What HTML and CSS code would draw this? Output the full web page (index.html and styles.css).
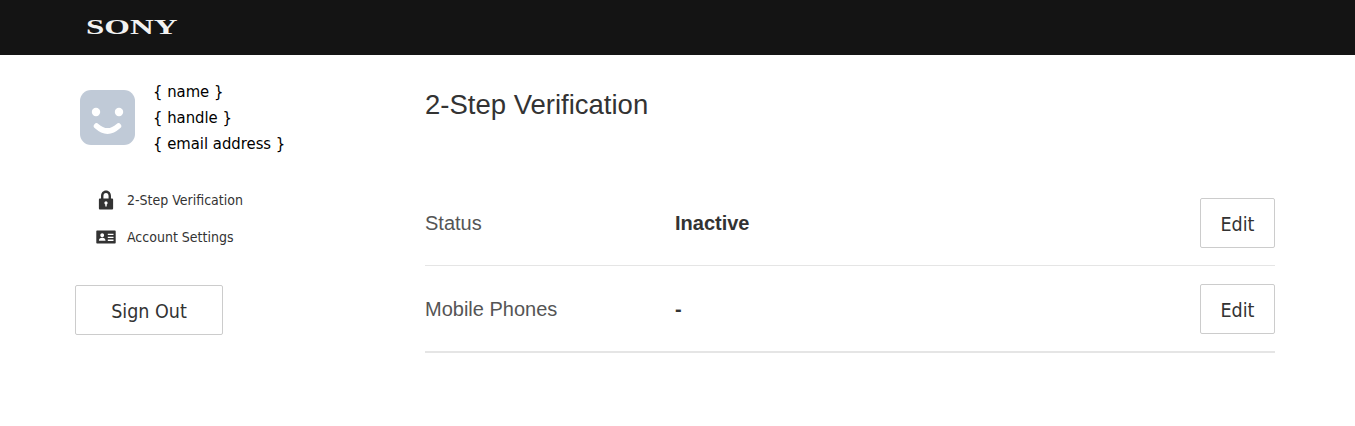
FILE: index.html
```html
<!DOCTYPE html>
<html lang="en">
<head>
    <meta charset="UTF-8">
    <meta name="viewport" content="width=device-width, initial-scale=1.0">
    <title>2-Step Verification</title>
    <link rel="stylesheet" href="styles.css">
</head>
<body>

<header class="topbar">
    <span class="logo">SONY</span>
</header>

<div class="page">
    <aside class="sidebar">
        <div class="profile">
            <svg class="avatar" width="55" height="55" viewBox="0 0 55 55">
                <rect width="55" height="55" rx="11" fill="#c0cad7"/>
                <circle cx="16" cy="22" r="4.200" fill="#fff"/>
                <circle cx="39" cy="22" r="4.200" fill="#fff"/>
                <path d="M16.500 36Q27.500 46 38.500 36" fill="none" stroke="#fff" stroke-width="5.500" stroke-linecap="round"/>
            </svg>
            <div class="profile-text">
                <div>{ name }</div>
                <div>{ handle }</div>
                <div>{ email address }</div>
            </div>
        </div>
        <nav class="side-nav">
            <a href="#" class="side-link">
                <span class="side-icon">
                    <svg width="16" height="20" viewBox="0 0 18 20" preserveAspectRatio="none">
                        <path fill-rule="evenodd" fill="#333" d="M9 0.500c-3.400 0-5.600 2.400-5.600 5.600v2.400h-1.400c-.6 0-1 .4-1 1v9c0 .6.4 1 1 1h14c.6 0 1-.4 1-1v-9c0-.6-.4-1-1-1h-1.400v-2.400c0-3.200-2.200-5.600-5.600-5.600zm0 2.600c1.800 0 2.900 1.200 2.900 3v2.400h-5.800v-2.400c0-1.800 1.100-3 2.900-3zm0 8.100c1 0 1.800.8 1.800 1.700 0 .7-.4 1.200-1 1.500v2.100h-1.600v-2.100c-.6-.3-1-.8-1-1.500 0-.9.8-1.700 1.800-1.700z"/>
                    </svg>
                </span>
                2-Step Verification
            </a>
            <a href="#" class="side-link">
                <span class="side-icon">
                    <svg width="20" height="14" viewBox="0 0 20 14">
                        <path fill-rule="evenodd" fill="#333" d="M1 0.500h18c.4 0 .7.300.7.700v11.600c0 .4-.3.700-.7.700h-18c-.4 0-.7-.3-.7-.7v-11.600c0-.4.300-.7.700-.7zm5.200 2.800c-1.100 0-1.900.9-1.900 2s.8 2 1.900 2 1.900-.9 1.900-2-.8-2-1.900-2zm-3.300 7.500h6.600c0-1.800-1.200-3-3.300-3s-3.300 1.200-3.300 3zm8.900-7v1.300h5.700v-1.300zm0 2.900v1.300h5.700v-1.300zm0 2.900v1.300h5.700v-1.300z"/>
                    </svg>
                </span>
                Account Settings
            </a>
        </nav>
        <button class="btn btn-signout" type="button">Sign Out</button>
    </aside>

    <main class="content">
        <h1 class="title">2-Step Verification</h1>
        <div class="row">
            <div class="row-label">Status</div>
            <div class="row-value">Inactive</div>
            <button class="btn btn-edit" type="button">Edit</button>
        </div>
        <div class="row row-last">
            <div class="row-label">Mobile Phones</div>
            <div class="row-value">-</div>
            <button class="btn btn-edit" type="button">Edit</button>
        </div>
    </main>
</div>

</body>
</html>
```

FILE: styles.css
```css
body { margin: 0; background: #fff; font-family: "DejaVu Sans Condensed", "DejaVu Sans", sans-serif; color: #333; }

.topbar { height: 55px; background: #141414; padding-left: 86px; display: flex; align-items: center; }
.logo { display: inline-block; font-family: "Liberation Serif", serif; font-weight: bold; font-size: 22px; line-height: 1; color: #f2f2f2; transform: scaleX(1.5); transform-origin: left center; margin-top: -1px; }

.page { display: flex; padding: 0 80px 0 75px; }
.sidebar { width: 350px; flex-shrink: 0; }
.content { flex: 1; }

.profile { display: flex; padding: 24px 0 0 5px; }
.avatar { margin: 11px 18px 0 0; }
.profile-text { font-size: 16.5px; line-height: 26px; color: #000; }

.side-nav { display: flex; flex-direction: column; margin-top: 24px; padding-left: 21px; }
.side-link { display: flex; align-items: center; height: 37px; font-size: 14px; color: #333; text-decoration: none; }
.side-icon { display: flex; justify-content: center; width: 20px; margin-right: 11px; }

.btn { background: #fff; border: 1px solid #ccc; border-radius: 2px; font-family: "DejaVu Sans Condensed", "DejaVu Sans", sans-serif; color: #333; height: 50px; padding: 2px 0 0; }
.btn-signout { width: 148px; margin-top: 30px; font-size: 19.5px; }
.btn-edit { width: 75px; font-size: 19.5px; }

.title { margin: 0; padding-top: 32px; height: 125px; font-family: "Liberation Sans", sans-serif; font-size: 27.5px; font-weight: normal; line-height: 36px; color: #333; box-sizing: border-box; }

.row { display: flex; align-items: center; padding: 18px 0 17px; border-bottom: 1px solid #e5e5e5; font-family: "Liberation Sans", sans-serif; font-size: 20px; }
.row-last { border-bottom: 2px solid #e5e5e5; }
.row-label { width: 250px; color: #555; }
.row-value { flex: 1; font-weight: bold; color: #333; }
```
